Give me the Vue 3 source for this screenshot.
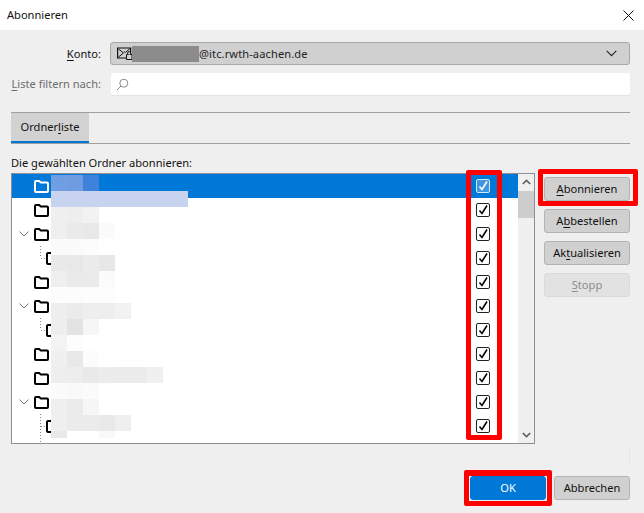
<script setup>
const rows = [
  { kind: 'top', selected: true },
  { kind: 'top' },
  { kind: 'parent' },
  { kind: 'child' },
  { kind: 'top' },
  { kind: 'parent' },
  { kind: 'child' },
  { kind: 'top' },
  { kind: 'top' },
  { kind: 'parent' },
  { kind: 'child', more: true },
  { kind: 'line' },
]

const mosaic = [
  [['#6f9fe3'], ['#6f9be0'], ['#3f82dc']],
  [['#c7d3ef', 137]],
  [['#f0f0f0'], ['#eeeeee'], ['#f2f2f2']],
  [['#efefef'], ['#eaeaea'], ['#e8e8e8'], ['#fbfbfb']],
  [['#fafafa'], ['#fbfbfb'], ['#fcfcfc']],
  [['#e9e9e9'], ['#e8e8e8'], ['#ececec'], ['#e7e7e7']],
  [['#efefef'], ['#eaeaea'], ['#ebebeb'], ['#fbfbfb']],
  [['#fcfcfc'], ['#fcfcfc'], ['#fdfdfd'], ['#fdfdfd']],
  [['#eeeeee'], ['#ebebeb'], ['#eeeeee'], ['#eeeeee'], ['#f2f2f2']],
  [['#eeeeee'], ['#e3e3e3'], ['#f6f6f6']],
  [['#f3f3f3'], ['#fdfdfd']],
  [['#f0f0f0'], ['#e8e8e8'], ['#fcfcfc']],
  [['#eeeeee'], ['#ededed'], ['#e9e9e9'], ['#ececec'], ['#ebebeb'], ['#ebebeb'], ['#f0f0f0']],
  [['#fbfbfb'], ['#f9f9f9'], ['#fbfbfb']],
  [['#efefef'], ['#ebebeb'], ['#f6f6f6']],
  [['#efefef'], ['#ebebeb'], ['#ebebeb'], ['#e9e9e9'], ['#efefef']],
  [['#e9e9e9'], ['#ffffff'], ['#ffffff'], ['#f9f9f9']],
]
</script>

<template>
  <div class="dialog">
    <header class="titlebar">
      <span>Abonnieren</span>
      <svg class="close" width="11" height="11" viewBox="0 0 11 11">
        <path d="M.5.5l10 10M10.5.5l-10 10" stroke="#111" fill="none" />
      </svg>
    </header>

    <main class="content">
      <div class="form-row">
        <label class="form-label"><u>K</u>onto:</label>
        <div class="select">
          <svg class="account-icon" width="16" height="13" viewBox="0 0 16 13">
            <path d="M.6 1h13v10H.6z" fill="none" stroke="#111" stroke-width="1.2" />
            <path d="M1.5 2 6.5 6 1.5 10M13 1.5 8.5 5.5 7 4.5" fill="none" stroke="#111" />
            <path d="M9.5 7.5h5.5v5H9.5z" fill="#d0d0d0" stroke="#111" />
            <path d="M10.7 7.5V6a1.5 1.5 0 0 1 3 0v1.5" fill="#d0d0d0" stroke="#111" />
          </svg>
          <span class="account-text">@itc.rwth-aachen.de</span>
          <svg class="chevron" width="11" height="7" viewBox="0 0 11 7">
            <path d="M.7.8l4.8 4.8L10.3.8" fill="none" stroke="#222" stroke-width="1.1" />
          </svg>
        </div>
      </div>

      <div class="form-row filter-row">
        <label class="form-label muted"><u>L</u>iste filtern nach:</label>
        <div class="search">
          <svg width="13" height="13" viewBox="0 0 13 13">
            <circle cx="7.8" cy="5.2" r="4" fill="none" stroke="#8a8a8a" />
            <path d="M5 8 1 12" stroke="#8a8a8a" fill="none" />
          </svg>
        </div>
      </div>

      <div class="tabs">
        <div class="tab">Ordner<u>l</u>iste</div>
      </div>

      <p class="list-label">Die gewählten Ordner abonnieren:</p>

      <div class="main-row">
        <div class="tree">
          <div class="tree-rows">
            <div
              v-for="(row, i) in rows"
              :key="i"
              class="tree-row"
              :class="{ selected: row.selected }"
            >
              <template v-if="row.kind === 'line'">
                <svg class="guide" width="34" height="24" viewBox="0 0 34 24">
                  <path d="M28.5 0v24" stroke="#888" stroke-dasharray="1 2" fill="none" />
                </svg>
              </template>
              <template v-else>
                <span class="slot" :class="{ 'slot-child': row.kind === 'child' }">
                  <svg v-if="row.kind === 'parent'" class="twisty" width="10" height="6" viewBox="0 0 10 6">
                    <path d="M.5.5 5 5 9.5.5" fill="none" stroke="#777" />
                  </svg>
                  <svg v-if="row.kind === 'child'" class="guide" width="34" height="24" viewBox="0 0 34 24">
                    <path
                      :d="row.more ? 'M28.5 0v24M29 12.5h5' : 'M28.5 0v12M29 12.5h5'"
                      stroke="#888"
                      stroke-dasharray="1 2"
                      fill="none"
                    />
                  </svg>
                </span>
                <svg class="folder" width="15" height="14" viewBox="0 0 15 14">
                  <path
                    d="M1 3a1 1 0 0 1 1-1h3.2l1.6 1.6H13a1 1 0 0 1 1 1V12a1 1 0 0 1-1 1H2a1 1 0 0 1-1-1z"
                    fill="none"
                    :stroke="row.selected ? '#fff' : '#000'"
                    stroke-width="2"
                  />
                </svg>
                <span class="check">
                  <svg width="12" height="12" viewBox="0 0 12 12">
                    <path
                      d="M2.5 6.5 5 9.5 10 1.5"
                      fill="none"
                      :stroke="row.selected ? '#fff' : '#000'"
                      stroke-width="1.6"
                    />
                  </svg>
                </span>
              </template>
            </div>
          </div>
          <div class="scrollbar">
            <svg class="arrow" width="9" height="6" viewBox="0 0 9 6">
              <path d="M.8 5 4.5 1.4 8.2 5" fill="none" stroke="#606060" stroke-width="1.7" />
            </svg>
            <div class="thumb"></div>
            <div class="track"></div>
            <svg class="arrow" width="9" height="6" viewBox="0 0 9 6">
              <path d="M.8 1 4.5 4.6 8.2 1" fill="none" stroke="#606060" stroke-width="1.7" />
            </svg>
          </div>
        </div>

        <div class="actions">
          <button class="btn"><u>A</u>bonnieren</button>
          <button class="btn">A<u>b</u>bestellen</button>
          <button class="btn">Ak<u>t</u>ualisieren</button>
          <button class="btn disabled"><u>S</u>topp</button>
        </div>
      </div>

      <footer class="footer">
        <button class="btn footer-btn primary">OK</button>
        <button class="btn footer-btn">Abbrechen</button>
      </footer>
    </main>

    <div class="account-mask"></div>
    <div class="mosaic">
      <div v-for="(line, i) in mosaic" :key="i" class="mosaic-line">
        <span
          v-for="(cell, j) in line"
          :key="j"
          class="mosaic-cell"
          :style="{ background: cell[0], width: (cell[1] || 16) + 'px' }"
        ></span>
      </div>
    </div>

    <div class="ghost-line"></div>
    <div class="mark mark-checks"></div>
    <div class="mark mark-subscribe"></div>
    <div class="mark mark-ok"></div>
  </div>
</template>

<style>
html, body { margin: 0; background: #efefef; }
</style>

<style scoped>
.dialog {
  position: relative;
  width: 644px;
  height: 513px;
  overflow: hidden;
  background: #efefef;
  color: #111;
  font: 11.1px/16px "Noto Sans", sans-serif;
}
u { text-underline-offset: 2px; }
.titlebar {
  display: flex;
  align-items: center;
  justify-content: space-between;
  height: 30px;
  padding: 0 10px 0 7px;
  background: #fff;
  box-sizing: border-box;
}
.content { padding: 12px 14px 0 11px; }
.form-row { display: flex; align-items: center; }
.form-label { width: 90px; text-align: right; flex: none; white-space: nowrap; }
.muted { color: #6d6d6d; }
.select {
  display: flex;
  align-items: center;
  height: 23px;
  flex: 1;
  margin-left: 9px;
  padding: 0 12px 0 6px;
  box-sizing: border-box;
  background: #d0d0d0;
  border: 1px solid #a8a8a8;
  border-radius: 3px;
}
.account-text { margin-left: 66px; color: #222; letter-spacing: .1px; }
.chevron { margin-left: auto; }
.filter-row { margin-top: 8px; }
.search {
  display: flex;
  align-items: center;
  flex: 1;
  height: 22px;
  margin-left: 10px;
  padding-left: 5px;
  background: #fff;
  border-radius: 2px;
  box-shadow: 0 1px 1px rgba(0, 0, 0, .06);
}
.tabs {
  display: flex;
  margin-top: 17px;
  height: 32px;
  box-sizing: border-box;
  border-top: 1px solid #a0a0a0;
  border-bottom: 1px solid #a0a0a0;
}
.tab {
  width: 78px;
  height: 30px;
  box-sizing: border-box;
  padding-top: 6px;
  text-align: center;
  background: #d2d2d2;
  border-bottom: 2px solid #0078d7;
}
.list-label { margin: 11px 0 2px; }
.main-row { display: flex; }
.tree {
  display: flex;
  width: 524px;
  height: 271px;
  box-sizing: border-box;
  border: 1px solid #8e8e96;
  background: #fff;
  overflow: hidden;
}
.tree-rows { flex: 1; min-width: 0; }
.tree-row {
  display: flex;
  align-items: center;
  height: 24px;
  padding-right: 28px;
}
.tree-row.selected { background: #0078d7; }
.slot {
  position: relative;
  display: flex;
  align-items: center;
  justify-content: center;
  width: 22px;
  height: 24px;
  flex: none;
}
.twisty { margin-left: 2px; }
.slot-child { width: 34px; }
.slot .guide { position: absolute; left: 0; top: 0; }
.folder { flex: none; }
.check {
  display: flex;
  align-items: center;
  justify-content: center;
  width: 14px;
  height: 14px;
  box-sizing: border-box;
  margin-left: auto;
  border: 1px solid #222;
  border-radius: 2px;
}
.selected .check { border-color: #d5e8f8; background: #3e97e0; }
.scrollbar {
  display: flex;
  flex-direction: column;
  align-items: center;
  width: 16px;
  background: #f0f0f0;
}
.arrow { margin: 5px 0; flex: none; }
.thumb { align-self: stretch; height: 27px; margin-top: 1px; background: #cdcdcd; }
.track { flex: 1; }
.actions {
  display: flex;
  flex-direction: column;
  gap: 8px;
  width: 86px;
  margin-left: 9px;
  padding-top: 4px;
}
.btn {
  height: 24px;
  padding: 0;
  box-sizing: border-box;
  font: inherit;
  color: #111;
  background: #d0d0d0;
  border: 1px solid #b4b4b4;
  border-radius: 3px;
}
.btn.disabled { color: #8c8c8c; background: #e2e2e2; border-color: #dadada; }
.footer {
  display: flex;
  justify-content: flex-end;
  gap: 8px;
  margin-top: 32px;
}
.footer-btn { width: 76px; }
.primary {
  background: #0078d7;
  border-color: #0078d7;
  color: #fff;
  box-shadow: 0 0 0 1px #e8f1f9;
}

.account-mask {
  position: absolute;
  left: 132px;
  top: 46px;
  width: 67px;
  height: 16px;
  background: #8c8c8c;
}
.mosaic { position: absolute; left: 51px; top: 175px; }
.mosaic-line { display: flex; height: 16px; }
.mosaic-line:last-child { height: 7px; }
.mosaic-cell { display: block; height: 100%; }
.ghost-line {
  position: absolute;
  left: 629px;
  top: 447px;
  width: 1px;
  height: 16px;
  background: #e5e5e5;
}
.mark {
  position: absolute;
  box-sizing: border-box;
  border: 5px solid #f00;
  border-radius: 2px;
}
.mark-checks { left: 466px; top: 170px; width: 36px; height: 270px; }
.mark-subscribe { left: 538px; top: 169px; width: 100px; height: 37px; }
.mark-ok { left: 464px; top: 470px; width: 88px; height: 36px; border-top-width: 6px; }
</style>
